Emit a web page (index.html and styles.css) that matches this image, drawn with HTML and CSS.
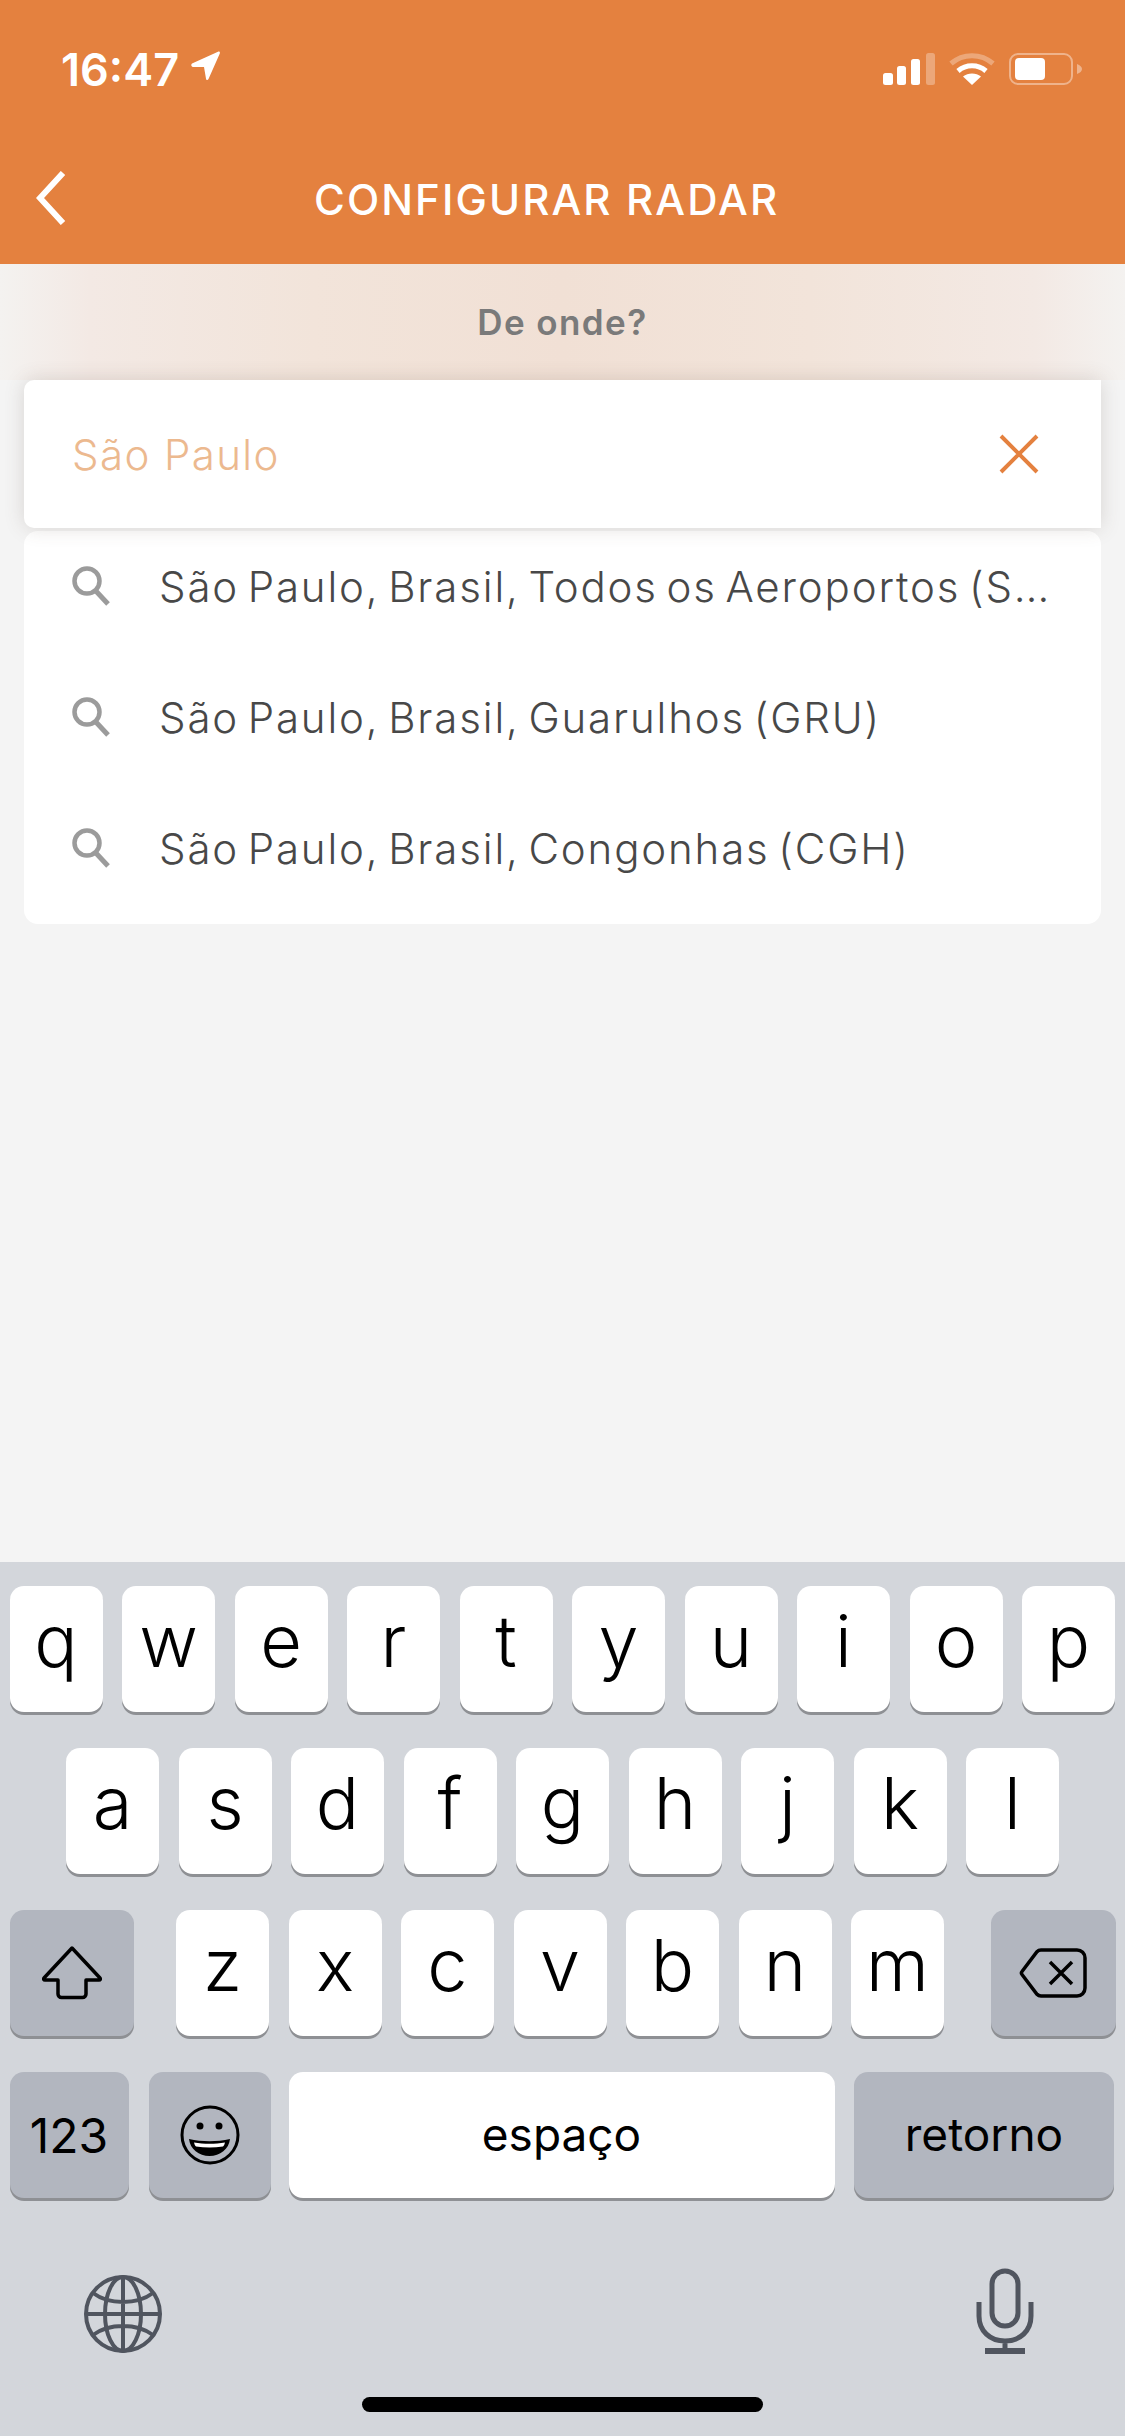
FILE: index.html
```html
<!DOCTYPE html>
<html lang="pt-BR">
<head>
    <meta charset="UTF-8">
    <meta name="viewport" content="width=device-width, initial-scale=1.0">
    <title>Configurar radar</title>
    <link rel="stylesheet" href="styles.css">
</head>
<body>

<div class="screen">
    <header class="header">
        <div class="status-bar">
            <div class="status-time">
                <span>16:47</span>
                <svg class="icon-location" width="30" height="30" viewBox="0 0 30 30"><path d="M1 12.500 27 .8c1.300-.6 2.300.4 1.800 1.700L17.500 28c-.7 1.500-2.300 1.300-2.500-.3L13 16 2 16c-1.800 0-2.300-2.500-1-3.500z" fill="#fff"/></svg>
            </div>
            <div class="status-icons">
                <svg width="52" height="32" viewBox="0 0 52 32"><rect x="0" y="20" width="10" height="12" rx="2.500" fill="#fff"/><rect x="14" y="13" width="9" height="19" rx="2.500" fill="#fff"/><rect x="28" y="6" width="9" height="26" rx="2.500" fill="#fff"/><rect x="43" y="0" width="9" height="32" rx="2.500" fill="#fff" opacity=".3"/></svg>
                <svg width="46" height="33" viewBox="0 0 46 33"><path d="M2 10.500C14 0 32 0 44 10.500" fill="none" stroke="#fff" stroke-width="5" opacity=".3"/><path d="M9 18C17 11 29 11 37 18" fill="none" stroke="#fff" stroke-width="5"/><path d="M23 32 14 23.500C19 19.500 27 19.500 32 23.500z" fill="#fff"/></svg>
                <svg width="73" height="32" viewBox="0 0 73 32"><rect x="1" y="1" width="62" height="30" rx="8" fill="none" stroke="#fff" stroke-width="2" opacity=".4"/><rect x="6" y="5" width="30" height="22" rx="4" fill="#fff"/><path d="M68 11c3 1 5 3 5 5s-2 4-5 5z" fill="#fff" opacity=".4"/></svg>
            </div>
        </div>
        <div class="nav-bar">
            <svg class="icon-back" width="30" height="54" viewBox="0 0 30 54"><path d="M27 2 4 27l23 25" fill="none" stroke="#fff" stroke-width="6"/></svg>
            <h1 class="nav-title">CONFIGURAR RADAR</h1>
        </div>
    </header>

    <main class="content">
        <div class="field-label">De onde?</div>
        <div class="search-card">
            <span class="search-value">São Paulo</span>
            <svg width="40" height="40" viewBox="0 0 40 40"><path d="M2 2 38 38M38 2 2 38" fill="none" stroke="#e4813f" stroke-width="4"/></svg>
        </div>
        <ul class="results">
            <li class="result">
                <svg class="icon-search" width="38" height="40" viewBox="0 0 38 40"><circle cx="15" cy="15" r="12.500" fill="none" stroke="#9b9b9b" stroke-width="4.500"/><path d="M23 24 36 38" fill="none" stroke="#9b9b9b" stroke-width="5"/></svg>
                <span class="result-text">São Paulo, Brasil, Todos os Aeroportos (S…</span>
            </li>
            <li class="result">
                <svg class="icon-search" width="38" height="40" viewBox="0 0 38 40"><circle cx="15" cy="15" r="12.500" fill="none" stroke="#9b9b9b" stroke-width="4.500"/><path d="M23 24 36 38" fill="none" stroke="#9b9b9b" stroke-width="5"/></svg>
                <span class="result-text">São Paulo, Brasil, Guarulhos (GRU)</span>
            </li>
            <li class="result">
                <svg class="icon-search" width="38" height="40" viewBox="0 0 38 40"><circle cx="15" cy="15" r="12.500" fill="none" stroke="#9b9b9b" stroke-width="4.500"/><path d="M23 24 36 38" fill="none" stroke="#9b9b9b" stroke-width="5"/></svg>
                <span class="result-text">São Paulo, Brasil, Congonhas (CGH)</span>
            </li>
        </ul>
    </main>

    <!-- teclado -->
    <section class="keyboard">
        <div class="key-row">
            <div class="key">q</div><div class="key">w</div><div class="key">e</div><div class="key">r</div><div class="key">t</div><div class="key">y</div><div class="key">u</div><div class="key">i</div><div class="key">o</div><div class="key">p</div>
        </div>
        <div class="key-row key-row-middle">
            <div class="key">a</div><div class="key">s</div><div class="key">d</div><div class="key">f</div><div class="key">g</div><div class="key">h</div><div class="key">j</div><div class="key">k</div><div class="key">l</div>
        </div>
        <div class="key-row">
            <div class="key key-dark key-shift">
                <svg width="60" height="54" viewBox="0 0 60 54"><path d="M30 2 58 32c.8 1 .3 2-1 2H44v14c0 2-1.500 3.500-3.500 3.500h-21c-2 0-3.500-1.500-3.500-3.500V34H3c-1.300 0-1.800-1-1-2z" fill="none" stroke="#000" stroke-width="3.500" stroke-linejoin="round"/></svg>
            </div>
            <div class="key key-gap-left">z</div><div class="key">x</div><div class="key">c</div><div class="key">v</div><div class="key">b</div><div class="key">n</div><div class="key">m</div>
            <div class="key key-dark key-delete">
                <svg width="68" height="50" viewBox="0 0 68 50"><path d="M22 2h36c4.500 0 8 3.500 8 8v30c0 4.500-3.500 8-8 8H22c-1.500 0-3-.6-4-1.700L3 26.500c-.8-1-.8-2 0-3L18 3.700C19 2.600 20.500 2 22 2z" fill="none" stroke="#000" stroke-width="3.500"/><path d="M31 14 53 36M53 14 31 36" fill="none" stroke="#000" stroke-width="3.500"/></svg>
            </div>
        </div>
        <div class="key-row key-row-bottom">
            <div class="key key-dark key-label key-numbers">123</div>
            <div class="key key-dark key-emoji">
                <svg width="60" height="60" viewBox="0 0 60 60"><circle cx="30" cy="30" r="28" fill="none" stroke="#000" stroke-width="3"/><circle cx="20" cy="21" r="3.500"/><circle cx="39" cy="21" r="3.500"/><path d="M9 34c13 3 28 3 41 0-1 10-10 17-20.500 17S10 44 9 34z"/><path d="M14 37.500c10 1.800 21 1.800 31 0-.5 2-1 3-2 4-9 1.300-18 1.300-27 0-1-1-1.500-2-2-4z" fill="#fff"/></svg>
            </div>
            <div class="key key-label key-space">espaço</div>
            <div class="key key-dark key-label key-return">retorno</div>
        </div>
        <div class="keyboard-tools">
            <svg width="80" height="80" viewBox="0 0 80 80" fill="none" stroke="#50555f" stroke-width="4"><circle cx="40" cy="40" r="37"/><ellipse cx="40" cy="40" rx="18" ry="37"/><path d="M40 3v74M3 40h74M10 19c16 12 44 12 60 0M10 61c16-12 44-12 60 0"/></svg>
            <svg width="58" height="86" viewBox="0 0 58 86" fill="none" stroke="#50555f" stroke-width="5"><rect x="16" y="3" width="26" height="55" rx="13"/><path d="M3 34v14c0 15 11 25 26 25s26-10 26-25V34M29 73v10"/><path d="M9 83h40" stroke-width="6"/></svg>
        </div>
        <div class="home-bar"></div>
    </section>
</div>

</body>
</html>
```

FILE: styles.css
```css
* {
    box-sizing: border-box;
}
body {
    margin: 0;
    padding: 0;
    background-color: #f4f4f4;
    font-family: Inter, "Liberation Sans", sans-serif;
}
.screen {
    display: flex;
    flex-direction: column;
    width: 1125px;
    height: 2436px;
    overflow: hidden;
}

/* topo */
.header {
    height: 264px;
    background-color: #e4813f;
    color: white;
}
.status-bar {
    display: flex;
    justify-content: space-between;
    align-items: center;
    height: 54px;
    margin-top: 42px;
    padding: 0 43px 0 61px;
}
.status-time {
    display: flex;
    align-items: center;
    gap: 12px;
    font-size: 45px;
    font-weight: 600;
}
.icon-location {
    margin-top: -6px;
}
.status-icons {
    display: flex;
    align-items: center;
    gap: 14px;
}
.nav-bar {
    display: flex;
    align-items: center;
    gap: 248px;
    margin-top: 75px;
    padding-left: 36px;
}
.nav-title {
    margin: 0;
    padding-top: 3px;
    font-size: 42px;
    font-weight: 500;
    letter-spacing: 2.100px;
    white-space: nowrap;
}

/* conteudo */
.content {
    flex: 1;
    padding: 0 24px;
}
.field-label {
    display: flex;
    justify-content: center;
    align-items: center;
    height: 116px;
    margin: 0 -24px;
    background: linear-gradient(90deg, #f4f2f0 0, #f3e9e4 8%, #f2e4da 28%, #f1e0d5 50%, #f2e4da 72%, #f3e9e4 92%, #f4f2f0 100%);
    color: #7a7a7a;
    font-size: 35px;
    font-weight: 600;
    letter-spacing: 1.400px;
}
.search-card {
    display: flex;
    justify-content: space-between;
    align-items: center;
    height: 148px;
    padding: 0 62px 0 48px;
    border-radius: 10px 0 0 10px;
    background-color: white;
    box-shadow: 0 0 20px rgba(90, 70, 60, 0.18);
    position: relative;
}
.search-value {
    color: #ecb98f;
    font-size: 42px;
    font-weight: 300;
    letter-spacing: 1.400px;
}
.results {
    display: flex;
    flex-direction: column;
    gap: 21px;
    margin: 3px 0 0;
    padding: 0 40px 21px 48px;
    border-radius: 14px;
    background-color: white;
    list-style: none;
}
.result {
    display: flex;
    align-items: center;
    gap: 49px;
    height: 110px;
}
.icon-search {
    flex-shrink: 0;
}
.result-text {
    white-space: nowrap;
    color: #484848;
    font-size: 42px;
    font-weight: 300;
    letter-spacing: 1.850px;
    word-spacing: -5px;
}

/* teclado */
.keyboard {
    padding: 24px 9.500px 24px;
    background-color: #d3d6db;
}
.key-row {
    display: flex;
    gap: 19.500px;
    margin-bottom: 36px;
}
.key-row-middle {
    justify-content: center;
}
.key {
    display: flex;
    justify-content: center;
    align-items: center;
    width: 93px;
    height: 126px;
    padding-bottom: 18px;
    border-radius: 14px;
    background-color: white;
    box-shadow: 0 3px 0 #8e9094;
    color: black;
    font-size: 72px;
    font-weight: 300;
}
.key-dark {
    background-color: #b2b6bf;
}
.key-shift {
    width: 124px;
    padding-bottom: 0;
}
.key-gap-left {
    margin-left: 23px;
}
.key-delete {
    width: 125px;
    margin-left: auto;
    padding-bottom: 0;
}
.key-row-bottom {
    margin-bottom: 0;
}
.key-label {
    padding-bottom: 3px;
    font-size: 46px;
    font-weight: 400;
}
.key-numbers {
    width: 119px;
    padding-bottom: 0;
    font-size: 48px;
}
.key-emoji {
    width: 122px;
    margin-left: 1px;
    padding-bottom: 0;
}
.key-space {
    width: 546px;
    margin-left: -2px;
}
.key-return {
    width: 260px;
}
.keyboard-tools {
    display: flex;
    justify-content: space-between;
    align-items: flex-end;
    margin-top: 70px;
    padding: 0 82px 0 73px;
}
.home-bar {
    width: 401px;
    height: 15px;
    margin: 43px auto 0;
    border-radius: 8px;
    background-color: black;
}
```
